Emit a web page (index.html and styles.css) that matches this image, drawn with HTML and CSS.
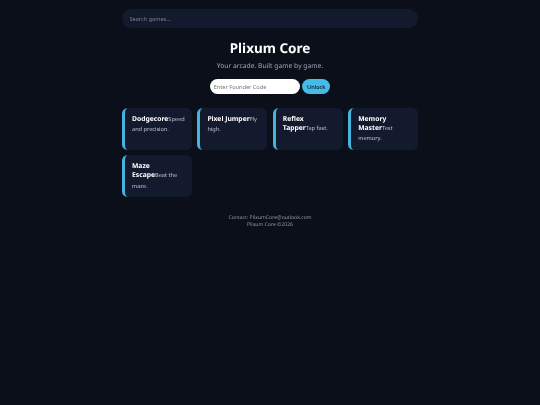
FILE: index.html
```html
<!DOCTYPE html>
<html>
<head>
    <title>Plixum Core</title>
    <meta charset="utf-8">
    <link rel="stylesheet" href="styles.css">
</head>
<body>
<div class="container">
    <input type="text" class="search" placeholder="Search games...">

    <h1>Plixum Core</h1>
    <p class="tagline">Your arcade. Built game by game.</p>

    <div class="unlock">
        <input type="text" class="code" placeholder="Enter Founder Code">
        <button type="button">Unlock</button>
    </div>

    <div class="games">
        <a class="card" href="#"><strong>Dodgecore</strong><span>Speed and precision.</span></a>
        <a class="card" href="#"><strong>Pixel Jumper</strong><span>Fly high.</span></a>
        <a class="card" href="#"><strong>Reflex Tapper</strong><span>Tap fast.</span></a>
        <a class="card" href="#"><strong>Memory Master</strong><span>Test memory.</span></a>
        <a class="card" href="#"><strong>Maze Escape</strong><span>Beat the maze.</span></a>
    </div>

    <footer>
        Contact: PlixumCore@outlook.com<br>
        Plixum Core ©2026
    </footer>
</div>
</body>
</html>
```

FILE: styles.css
```css
body {
    margin: 0;
    min-height: 405px;
    background-color: #0a0f1a;
    font-family: "Noto Sans", sans-serif;
    color: #ffffff;
    text-rendering: geometricPrecision;
}
.container {
    width: 296px;
    margin: 0 auto;
    padding-top: 9px;
    text-align: center;
    will-change: transform; /* grayscale text, no colour fringes */
}
.search {
    display: block;
    width: 100%;
    height: 19px;
    padding: 0 7.5px;
    box-sizing: border-box;
    border: none;
    border-radius: 9.5px;
    background-color: #141a2e;
    color: #ffffff;
    font-family: inherit;
    font-size: 5.6px;
}
.search::placeholder {
    color: #7c818e;
}
h1 {
    margin: 10px 0 0;
    font-size: 13.5px;
    line-height: 20px;
    font-weight: 700;
}
.tagline {
    margin: 2px 0 0;
    font-size: 6.75px;
    line-height: 11px;
    color: #a0a6b8;
}
.unlock {
    display: flex;
    justify-content: center;
    gap: 2.5px;
    margin-top: 8px;
}
.code {
    width: 90px;
    height: 15px;
    padding: 0 4px;
    box-sizing: border-box;
    border: none;
    border-radius: 7.5px;
    background-color: #ffffff;
    font-family: inherit;
    font-size: 5.6px;
}
.code::placeholder {
    color: #757575;
}
button {
    width: 28px;
    height: 15px;
    padding: 0;
    border: none;
    border-radius: 7.5px;
    background-color: #45bbe8;
    color: #0a0f1a;
    font-family: inherit;
    font-size: 5.6px;
    font-weight: 500;
}
.games {
    display: grid;
    grid-template-columns: repeat(4, minmax(0, 1fr));
    gap: 5.6px;
    margin-top: 14px;
    text-align: left;
}
.card {
    min-height: 41px;
    padding: 6px 7px;
    box-sizing: border-box;
    border-left: 3px solid #45b4dc;
    border-radius: 5.6px;
    background-color: #141a2e;
    color: #ffffff;
    text-decoration: none;
    font-size: 6.75px;
    line-height: 9.2px;
}
.card strong {
    font-size: 6.75px;
}
.card span {
    font-size: 5.6px;
    color: #c0c5d2;
}
footer {
    margin-top: 18px;
    font-size: 5.1px;
    line-height: 7.5px;
    color: #9297a8;
}
```
